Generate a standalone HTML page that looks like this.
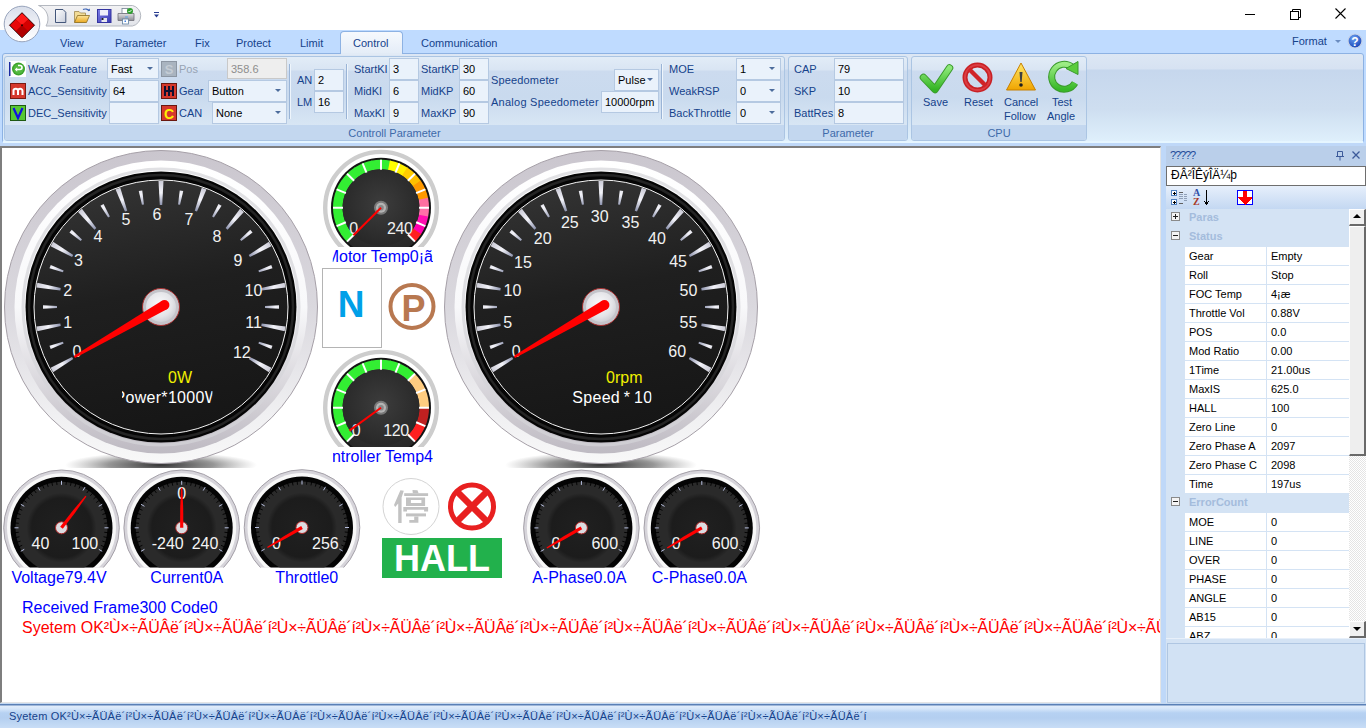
<!DOCTYPE html><html><head><meta charset="utf-8"><style>
*{margin:0;padding:0;box-sizing:border-box}
html,body{width:1366px;height:728px;overflow:hidden;background:#fff;font-family:"Liberation Sans",sans-serif;font-size:11px}
.a{position:absolute}
.t{position:absolute;white-space:nowrap;line-height:1}
.lbl{color:#15428B}
.box{position:absolute;background:#EAF2FB;border:1px solid #B5C9E2}
.dd:after{content:"";position:absolute;right:5px;top:8px;border-left:3px solid transparent;border-right:3px solid transparent;border-top:3px solid #4C6C9C}
.bt{position:absolute;left:3px;top:5px;color:#000;white-space:nowrap;line-height:1}
</style></head><body>

<div class="a" style="left:0;top:0;width:1366px;height:30px;background:#fff"></div>
<div class="a" style="left:1245px;top:14px;width:10px;height:1px;background:#000"></div>
<svg class="a" style="left:1288px;top:7px" width="14" height="14"><rect x="2.5" y="4.5" width="8" height="8" fill="none" stroke="#000"/><path d="M4.5 4.5V2.5H12.5V10.5H10.5" fill="none" stroke="#000"/></svg>
<svg class="a" style="left:1334px;top:7px" width="14" height="14"><path d="M1.5 1.5L11.5 11.5M11.5 1.5L1.5 11.5" stroke="#000" stroke-width="1.1"/></svg>
<div class="a" style="left:0;top:30px;width:1366px;height:24px;background:#BFDBFF"></div>
<div class="a" style="left:340px;top:31px;width:63px;height:24px;border:1px solid #8DB2E3;border-bottom:none;border-radius:4px 4px 0 0;background:linear-gradient(#F6F9FD,#E3ECF7)"></div>
<div class="t" style="left:60px;top:38px;color:#15428B;font-size:11px">View</div>
<div class="t" style="left:115px;top:38px;color:#15428B;font-size:11px">Parameter</div>
<div class="t" style="left:195px;top:38px;color:#15428B;font-size:11px">Fix</div>
<div class="t" style="left:236px;top:38px;color:#15428B;font-size:11px">Protect</div>
<div class="t" style="left:300px;top:38px;color:#15428B;font-size:11px">Limit</div>
<div class="t" style="left:353px;top:38px;color:#15428B;font-size:11px">Control</div>
<div class="t" style="left:421px;top:38px;color:#15428B;font-size:11px">Communication</div>
<div class="t" style="left:1292px;top:36px;color:#15428B;font-size:11px">Format</div>
<div class="a" style="left:1335px;top:40px;border-left:3px solid transparent;border-right:3px solid transparent;border-top:3px solid #6A8CC0"></div>
<svg class="a" style="left:1347px;top:33px" width="16" height="16"><defs><radialGradient id="hg" cx="0.4" cy="0.3" r="0.7"><stop offset="0" stop-color="#6AA0F0"/><stop offset="1" stop-color="#1A46B8"/></radialGradient></defs><circle cx="8" cy="8" r="7" fill="url(#hg)" stroke="#C8D4E8" stroke-width="1.2"/><text x="8" y="12.5" font-family="Liberation Sans" font-weight="bold" font-size="12" fill="#fff" text-anchor="middle">?</text></svg>
<div class="a" style="left:0;top:54px;width:1366px;height:92px;background:#BFDBFF"></div>
<div class="a" style="left:2px;top:53px;width:1362px;height:90px;border:1px solid #8DB2E3;border-radius:3px;background:linear-gradient(#DDE7F4 0px,#D6E2F2 15px,#C6D7ED 16px,#CEDEF0 55px,#DFF0FC 88px)"></div>
<div class="a" style="left:3px;top:141px;width:1360px;height:2px;background:#E6F6FF"></div>
<div class="a" style="left:341px;top:53px;width:61px;height:2px;background:#E2EBF6"></div>
<div class="a" style="left:4px;top:56px;width:781px;height:85px;border:1px solid #ABC5E3;border-radius:3px;background:linear-gradient(#E2ECF7 0px,#D9E5F3 13px,#CCDBEF 14px,#C9DAEE 40px,#D8E6F4 68px)"></div>
<div class="a" style="left:5px;top:125px;width:779px;height:15px;background:#C3D7EF;border-radius:0 0 2px 2px"></div>
<div class="t" style="left:4px;width:781px;text-align:center;top:128px;color:#3E6AAA;font-size:11px">Controll Parameter</div>
<div class="a" style="left:788px;top:56px;width:120px;height:85px;border:1px solid #ABC5E3;border-radius:3px;background:linear-gradient(#E2ECF7 0px,#D9E5F3 13px,#CCDBEF 14px,#C9DAEE 40px,#D8E6F4 68px)"></div>
<div class="a" style="left:789px;top:125px;width:118px;height:15px;background:#C3D7EF;border-radius:0 0 2px 2px"></div>
<div class="t" style="left:788px;width:120px;text-align:center;top:128px;color:#3E6AAA;font-size:11px">Parameter</div>
<div class="a" style="left:911px;top:56px;width:176px;height:85px;border:1px solid #ABC5E3;border-radius:3px;background:linear-gradient(#E2ECF7 0px,#D9E5F3 13px,#CCDBEF 14px,#C9DAEE 40px,#D8E6F4 68px)"></div>
<div class="a" style="left:912px;top:125px;width:174px;height:15px;background:#C3D7EF;border-radius:0 0 2px 2px"></div>
<div class="t" style="left:911px;width:176px;text-align:center;top:128px;color:#3E6AAA;font-size:11px">CPU</div>
<svg class="a" style="left:9px;top:61px" width="18" height="17"><rect x="1" y="0" width="16" height="16" fill="#fff"/><rect x="0" y="1" width="1.5" height="14" fill="#1C2AA0"/><circle cx="9.5" cy="8" r="6.5" fill="#3CA32A"/><circle cx="9.5" cy="8" r="5" fill="#52B83E"/><path d="M6.5 8.5h4.5a2 2 0 0 0 0-4H9" stroke="#fff" stroke-width="1.6" fill="none"/><path d="M6 8.5l2.2-2.2v4.4z" fill="#fff"/></svg>
<svg class="a" style="left:10px;top:83px" width="16" height="16"><rect x="0.5" y="0.5" width="15" height="15" fill="#D5382C" stroke="#7A1A12"/><path d="M3.5 12V6.5M3.5 8a2.2 2.2 0 0 1 4.5 0V12M8 8a2.2 2.2 0 0 1 4.5 0V12" stroke="#fff" stroke-width="2" fill="none"/></svg>
<svg class="a" style="left:10px;top:105px" width="16" height="16"><rect x="0.5" y="0.5" width="15" height="15" fill="#56C832" stroke="#1F5A10"/><path d="M3.5 3L8 13L12.5 3" stroke="#1010E0" stroke-width="2.2" fill="none"/></svg>
<div class="t" style="left:28px;top:64px;color:#15428B;font-size:11px">Weak Feature</div>
<div class="t" style="left:28px;top:86px;color:#15428B;font-size:11px">ACC_Sensitivity</div>
<div class="t" style="left:28px;top:108px;color:#15428B;font-size:11px">DEC_Sensitivity</div>
<div class="box dd" style="left:107px;top:58px;width:52px;height:21px"><span class="bt" style="color:#000">Fast</span></div>
<div class="box" style="left:109px;top:80px;width:50px;height:22px"><span class="bt" style="color:#000">64</span></div>
<div class="box" style="left:109px;top:102px;width:50px;height:22px"><span class="bt" style="color:#000"></span></div>
<svg class="a" style="left:161px;top:61px" width="16" height="16"><rect x="0.5" y="0.5" width="15" height="15" fill="#A9B4C0" stroke="#8C96A3"/><text x="8" y="13" font-family="Liberation Sans" font-weight="bold" font-size="13" fill="#C4CCD5" text-anchor="middle">S</text></svg>
<svg class="a" style="left:161px;top:83px" width="16" height="16"><rect x="0.5" y="0.5" width="15" height="15" fill="#D5382C" stroke="#6A1810"/><path d="M4 3v10M8 3v10M12 3v10M4 8h8" stroke="#101030" stroke-width="2"/></svg>
<svg class="a" style="left:161px;top:105px" width="16" height="16"><rect x="0.5" y="0.5" width="15" height="15" fill="#D5382C" stroke="#6A1810"/><text x="8" y="13.5" font-family="Liberation Sans" font-weight="bold" font-size="14" fill="#FFF200" text-anchor="middle">C</text></svg>
<div class="t" style="left:179px;top:64px;color:#97A3B3;font-size:11px">Pos</div>
<div class="t" style="left:179px;top:86px;color:#15428B;font-size:11px">Gear</div>
<div class="t" style="left:179px;top:108px;color:#15428B;font-size:11px">CAN</div>
<div class="box" style="left:227px;top:58px;width:60px;height:21px;background:#EEEEEE;border-color:#C9C9C9"><span class="bt" style="color:#8D8D8D">358.6</span></div>
<div class="box dd" style="left:208px;top:80px;width:79px;height:22px"><span class="bt" style="color:#000">Button</span></div>
<div class="box dd" style="left:212px;top:102px;width:75px;height:22px"><span class="bt" style="color:#000">None</span></div>
<div class="a" style="left:289px;top:64px;width:1px;height:55px;background:#9AB4D6;box-shadow:1px 0 0 #EEF5FC"></div>
<div class="t" style="left:297px;top:75px;color:#15428B;font-size:11px">AN</div>
<div class="t" style="left:297px;top:97px;color:#15428B;font-size:11px">LM</div>
<div class="box" style="left:314px;top:69px;width:30px;height:22px"><span class="bt" style="color:#000">2</span></div>
<div class="box" style="left:314px;top:91px;width:30px;height:22px"><span class="bt" style="color:#000">16</span></div>
<div class="a" style="left:346px;top:64px;width:1px;height:55px;background:#9AB4D6;box-shadow:1px 0 0 #EEF5FC"></div>
<div class="t" style="left:354px;top:64px;color:#15428B;font-size:11px">StartKI</div>
<div class="t" style="left:354px;top:86px;color:#15428B;font-size:11px">MidKI</div>
<div class="t" style="left:354px;top:108px;color:#15428B;font-size:11px">MaxKI</div>
<div class="box" style="left:389px;top:58px;width:30px;height:22px"><span class="bt" style="color:#000">3</span></div>
<div class="box" style="left:389px;top:80px;width:30px;height:22px"><span class="bt" style="color:#000">6</span></div>
<div class="box" style="left:389px;top:102px;width:30px;height:22px"><span class="bt" style="color:#000">9</span></div>
<div class="t" style="left:421px;top:64px;color:#15428B;font-size:11px">StartKP</div>
<div class="t" style="left:421px;top:86px;color:#15428B;font-size:11px">MidKP</div>
<div class="t" style="left:421px;top:108px;color:#15428B;font-size:11px">MaxKP</div>
<div class="box" style="left:459px;top:58px;width:30px;height:22px"><span class="bt" style="color:#000">30</span></div>
<div class="box" style="left:459px;top:80px;width:30px;height:22px"><span class="bt" style="color:#000">60</span></div>
<div class="box" style="left:459px;top:102px;width:30px;height:22px"><span class="bt" style="color:#000">90</span></div>
<div class="t" style="left:491px;top:75px;color:#15428B;font-size:11px"><span style="letter-spacing:0.15px">Speedometer</span></div>
<div class="t" style="left:491px;top:97px;color:#15428B;font-size:11px"><span style="letter-spacing:0.25px">Analog Speedometer</span></div>
<div class="box dd" style="left:614px;top:69px;width:45px;height:22px"><span class="bt" style="color:#000">Pulse</span></div>
<div class="box" style="left:601px;top:91px;width:58px;height:22px"><span class="bt" style="color:#000">10000rpm</span></div>
<div class="a" style="left:661px;top:64px;width:1px;height:55px;background:#9AB4D6;box-shadow:1px 0 0 #EEF5FC"></div>
<div class="t" style="left:669px;top:64px;color:#15428B;font-size:11px">MOE</div>
<div class="t" style="left:669px;top:86px;color:#15428B;font-size:11px">WeakRSP</div>
<div class="t" style="left:669px;top:108px;color:#15428B;font-size:11px">BackThrottle</div>
<div class="box dd" style="left:736px;top:58px;width:45px;height:22px"><span class="bt" style="color:#000">1</span></div>
<div class="box dd" style="left:736px;top:80px;width:45px;height:22px"><span class="bt" style="color:#000">0</span></div>
<div class="box dd" style="left:736px;top:102px;width:45px;height:22px"><span class="bt" style="color:#000">0</span></div>
<div class="t" style="left:794px;top:64px;color:#15428B;font-size:11px">CAP</div>
<div class="t" style="left:794px;top:86px;color:#15428B;font-size:11px">SKP</div>
<div class="t" style="left:794px;top:108px;color:#15428B;font-size:11px">BattRes</div>
<div class="box" style="left:834px;top:58px;width:70px;height:22px"><span class="bt" style="color:#000">79</span></div>
<div class="box" style="left:834px;top:80px;width:70px;height:22px"><span class="bt" style="color:#000">10</span></div>
<div class="box" style="left:834px;top:102px;width:70px;height:22px"><span class="bt" style="color:#000">8</span></div>
<svg class="a" style="left:915px;top:58px" width="172" height="40">
<defs><linearGradient id="ck" x1="0" y1="0" x2="0" y2="1"><stop offset="0" stop-color="#8CE878"/><stop offset="1" stop-color="#34B424"/></linearGradient>
<linearGradient id="rg" x1="0" y1="0" x2="0" y2="1"><stop offset="0" stop-color="#9CEC84"/><stop offset="1" stop-color="#38B828"/></linearGradient>
<linearGradient id="wg" x1="0" y1="0" x2="0" y2="1"><stop offset="0" stop-color="#FFE868"/><stop offset="1" stop-color="#F0A400"/></linearGradient></defs>
<path d="M8.5 19.5L20 31.5L34.5 10" fill="none" stroke="#3A9A2C" stroke-width="7.5" stroke-linecap="round" stroke-linejoin="round"/>
<path d="M8.5 19.5L20 31.5L34.5 10" fill="none" stroke="url(#ck)" stroke-width="5.5" stroke-linecap="round" stroke-linejoin="round"/>
<circle cx="62.5" cy="19.5" r="12.5" fill="none" stroke="#C82024" stroke-width="5"/>
<circle cx="62.5" cy="19.5" r="12.5" fill="none" stroke="#E85058" stroke-width="2" stroke-opacity="0.6"/>
<path d="M54 11L71 28" stroke="#D02428" stroke-width="4.5"/>
<path d="M106 5L120.5 32H91.5Z" fill="url(#wg)" stroke="#C88000" stroke-width="1" stroke-linejoin="round"/>
<path d="M104.5 14h3l-0.8 10h-1.4z" fill="#404040"/><circle cx="106" cy="27" r="1.8" fill="#202020"/>
<path d="M160 25A12.5 12.5 0 1 1 157 9" fill="none" stroke="#3A9A2C" stroke-width="7"/>
<path d="M160 25A12.5 12.5 0 1 1 157 9" fill="none" stroke="url(#rg)" stroke-width="5"/>
<path d="M151 10.5L163 3.5L163 16.5Z" fill="#5ACC3C" stroke="#3A9A2C" stroke-width="1"/>
</svg>
<div class="t" style="left:923px;top:97px;color:#15428B;font-size:11px">Save</div>
<div class="t" style="left:964px;top:97px;color:#15428B;font-size:11px">Reset</div>
<div class="t" style="left:1004px;top:97px;color:#15428B;font-size:11px">Cancel</div>
<div class="t" style="left:1004px;top:111px;color:#15428B;font-size:11px">Follow</div>
<div class="t" style="left:1052px;top:97px;color:#15428B;font-size:11px">Test</div>
<div class="t" style="left:1047px;top:111px;color:#15428B;font-size:11px">Angle</div>
<svg class="a" style="left:0;top:0" width="170" height="50">
<defs><linearGradient id="orb" x1="0" y1="0" x2="0" y2="1"><stop offset="0" stop-color="#D8DEEA"/><stop offset="0.5" stop-color="#EEF0F6"/><stop offset="1" stop-color="#FFFFFF"/></linearGradient>
<linearGradient id="qat" x1="0" y1="0" x2="0" y2="1"><stop offset="0" stop-color="#F2F2F4"/><stop offset="1" stop-color="#E2E4EA"/></linearGradient></defs>
<path d="M38.5 5.5H132.5a10.5 10.5 0 0 1 0 20.5H46a14 14 0 0 0 -7.5 -20.5z" fill="url(#qat)" stroke="#B4B8C0"/>
<circle cx="22" cy="24" r="17.8" fill="url(#orb)" stroke="#98A4BC" stroke-width="1"/>
<path d="M22 12.7L34.5 25.2L22 37.7L9.5 25.2Z" fill="#C00000" stroke="#300000" stroke-width="1"/>
<path d="M22 13.5L28.2 19.2L22 25.2L15.8 19.2Z" fill="#FF1A1A"/>
<path d="M10.5 25.2L15.8 19.7L22 25.2L16 31Z" fill="#E80808"/>
<path d="M33.5 25.2L28.2 19.7L22 25.2L28 31Z" fill="#D40000"/>
<path d="M22 37L16 31L22 25.2L28 31Z" fill="#B00000"/>
<circle cx="22" cy="25.2" r="1" fill="#300000"/>
<defs><linearGradient id="dg" x1="0" y1="0" x2="1" y2="1"><stop offset="0" stop-color="#FFFFFF"/><stop offset="1" stop-color="#C8CEDC"/></linearGradient>
<linearGradient id="fg" x1="0" y1="0" x2="0" y2="1"><stop offset="0" stop-color="#FCE49C"/><stop offset="1" stop-color="#EAA820"/></linearGradient>
<linearGradient id="flg" x1="0" y1="0" x2="1" y2="1"><stop offset="0" stop-color="#8080E8"/><stop offset="1" stop-color="#3838B0"/></linearGradient>
<linearGradient id="pg" x1="0" y1="0" x2="0" y2="1"><stop offset="0" stop-color="#E0E0E4"/><stop offset="1" stop-color="#8C8C94"/></linearGradient></defs>
<path d="M55.5 9.5h7.5l2.8 2.8v10.2h-10.3z" fill="url(#dg)" stroke="#43567A"/>
<path d="M74.5 11.5h4.5l1.5 1.5h5v9h-11z" fill="#F2DC98" stroke="#A08850" stroke-width="0.8"/>
<path d="M77.5 15.5h12l-3 7h-12z" fill="url(#fg)" stroke="#8C6C20" stroke-width="0.8"/>
<path d="M83 9.5a4 3 0 0 1 6 1.5" fill="none" stroke="#3C64B8" stroke-width="1.2"/><path d="M87.5 10.5l2.5 0.5l-0.3-2.5z" fill="#3C64B8"/>
<rect x="97.5" y="9.5" width="13.5" height="13" fill="url(#flg)" stroke="#3434A0"/>
<rect x="100" y="10" width="8" height="5.5" fill="#F0F0FA"/>
<rect x="101.5" y="18" width="5.5" height="4" fill="#E8E8F0"/><rect x="101.5" y="18" width="2" height="2" fill="#202030"/>
<rect x="122" y="8.5" width="6" height="5" fill="#FFFFFF" stroke="#708090" stroke-width="0.8"/>
<path d="M118 13.5h16v7h-16z" fill="url(#pg)" stroke="#707078" stroke-width="0.8"/>
<rect x="125" y="16.5" width="3" height="1" fill="#58A0E8"/>
<rect x="122.5" y="19" width="6" height="5" fill="#FFFFFF" stroke="#6080A0" stroke-width="0.8"/><rect x="124.5" y="20.5" width="1.5" height="1.5" fill="#4080E0"/>
<circle cx="130" cy="11" r="3" fill="#30A030"/><path d="M128.5 11l1 1l2-2" stroke="#fff" stroke-width="0.9" fill="none"/>
<path d="M154 12.5h5" stroke="#283C90"/><path d="M154 14.5h5l-2.5 3z" fill="#283C90"/>
</svg>
<div class="a" style="left:0;top:143px;width:1366px;height:561px;background:#BFD8F8"></div>
<div class="a" style="left:0;top:146px;width:1161px;height:557px;background:#fff;border-top:2px solid #7E7E7E;border-left:2px solid #7E7E7E;border-right:1px solid #E4E4E4;border-bottom:1px solid #E4E4E4"></div>
<div class="a" style="left:322px;top:268px;width:60px;height:80px;border:1px solid #B4B4B4;background:#fff"></div>
<svg class="a" style="left:0;top:0;font-family:&quot;Liberation Sans&quot;,sans-serif" width="1366" height="728"><defs>
<radialGradient id="bez" cx="0.5" cy="0.5" r="0.5"><stop offset="0.86" stop-color="#FFFFFF"/><stop offset="0.93" stop-color="#F2F2F4"/><stop offset="0.975" stop-color="#D6D2DA"/><stop offset="1" stop-color="#A8A2AA"/></radialGradient>
<linearGradient id="bezl" x1="0" y1="0" x2="0" y2="1"><stop offset="0" stop-color="#000" stop-opacity="0"/><stop offset="0.6" stop-color="#000" stop-opacity="0"/><stop offset="1" stop-color="#000" stop-opacity="0.22"/></linearGradient>
<linearGradient id="bzo" x1="0" y1="0" x2="0" y2="1"><stop offset="0" stop-color="#CAC6CE"/><stop offset="0.5" stop-color="#DAD8DE"/><stop offset="0.85" stop-color="#F0F0F2"/><stop offset="1" stop-color="#F8F8F8"/></linearGradient>
<linearGradient id="bzi" x1="0" y1="0" x2="0" y2="1"><stop offset="0" stop-color="#FFFFFF"/><stop offset="0.5" stop-color="#F8F8FA"/><stop offset="1" stop-color="#BEBAC2"/></linearGradient>
<linearGradient id="face" x1="0.3" y1="0" x2="0.5" y2="1"><stop offset="0" stop-color="#343434"/><stop offset="0.45" stop-color="#1F1F1F"/><stop offset="1" stop-color="#161616"/></linearGradient>
<linearGradient id="tick" x1="0" y1="0" x2="0" y2="1"><stop offset="0" stop-color="#F4F4FA"/><stop offset="1" stop-color="#8C8CA0"/></linearGradient>
<radialGradient id="hub" cx="0.45" cy="0.4" r="0.6"><stop offset="0" stop-color="#FAFAFC"/><stop offset="0.7" stop-color="#E4E4E8"/><stop offset="1" stop-color="#D0D0D6"/></radialGradient>
<radialGradient id="shad" cx="0.5" cy="0.5" r="0.5"><stop offset="0" stop-color="#282828" stop-opacity="0.95"/><stop offset="0.55" stop-color="#505050" stop-opacity="0.6"/><stop offset="1" stop-color="#808080" stop-opacity="0"/></radialGradient>
<radialGradient id="sface" cx="0.5" cy="0.45" r="0.6"><stop offset="0" stop-color="#3C3C3C"/><stop offset="1" stop-color="#262626"/></radialGradient>
<radialGradient id="mface" cx="0.5" cy="0.5" r="0.5"><stop offset="0" stop-color="#202020"/><stop offset="0.85" stop-color="#1C1C1C"/><stop offset="1" stop-color="#2A2A2A"/></radialGradient>
<clipPath id="c1"><rect x="2" y="148" width="1158" height="320"/></clipPath>
</defs>
<radialGradient id="tkg1" gradientUnits="userSpaceOnUse" cx="161" cy="307" r="127"><stop offset="0.80" stop-color="#8A90AC"/><stop offset="0.90" stop-color="#F4F4FA"/><stop offset="1" stop-color="#C8C8D4"/></radialGradient>
<g clip-path="url(#c1)">
<ellipse cx="161" cy="465" rx="96" ry="13" fill="url(#shad)"/>
</g>
<circle cx="161" cy="307" r="156.5" fill="url(#bzo)" stroke="#A6A0A8" stroke-width="1"/>
<circle cx="161" cy="307" r="146.5" fill="url(#bzi)"/>
<circle cx="161" cy="307" r="138" fill="none" stroke="#D4D4D8" stroke-width="3" stroke-opacity="0.7"/>
<circle cx="161" cy="307" r="135.5" fill="#050505"/>
<circle cx="161" cy="307" r="132" fill="none" stroke="#242424" stroke-width="2.5"/>
<circle cx="161" cy="307" r="127" fill="url(#face)" stroke="#F4F4F4" stroke-width="1"/>
<polygon points="72.07,356.96 50.63,367.83 53.13,372.17 73.27,359.04" fill="url(#tkg1)"/>
<polygon points="62.93,341.63 49.50,345.67 50.73,349.05 63.61,343.51" fill="url(#tkg1)"/>
<polygon points="60.34,323.53 36.48,326.42 37.35,331.34 60.76,325.89" fill="url(#tkg1)"/>
<polygon points="57.00,306.00 43.00,305.20 43.00,308.80 57.00,308.00" fill="url(#tkg1)"/>
<polygon points="60.76,288.11 37.35,282.66 36.48,287.58 60.34,290.47" fill="url(#tkg1)"/>
<polygon points="63.61,270.49 50.73,264.95 49.50,268.33 62.93,272.37" fill="url(#tkg1)"/>
<polygon points="73.27,254.96 53.13,241.83 50.63,246.17 72.07,257.04" fill="url(#tkg1)"/>
<polygon points="81.97,239.38 71.76,229.77 69.45,232.53 80.69,240.92" fill="url(#tkg1)"/>
<polygon points="96.35,228.09 81.92,208.87 78.09,212.09 94.52,229.63" fill="url(#tkg1)"/>
<polygon points="109.87,216.43 103.56,203.91 100.44,205.71 108.13,217.43" fill="url(#tkg1)"/>
<polygon points="127.24,210.74 120.25,187.74 115.56,189.45 124.99,211.56" fill="url(#tkg1)"/>
<polygon points="143.93,204.41 142.28,190.48 138.74,191.11 141.96,204.75" fill="url(#tkg1)"/>
<polygon points="162.20,205.00 163.50,181.00 158.50,181.00 159.80,205.00" fill="url(#tkg1)"/>
<polygon points="180.04,204.75 183.26,191.11 179.72,190.48 178.07,204.41" fill="url(#tkg1)"/>
<polygon points="197.01,211.56 206.44,189.45 201.75,187.74 194.76,210.74" fill="url(#tkg1)"/>
<polygon points="213.87,217.43 221.56,205.71 218.44,203.91 212.13,216.43" fill="url(#tkg1)"/>
<polygon points="227.48,229.63 243.91,212.09 240.08,208.87 225.65,228.09" fill="url(#tkg1)"/>
<polygon points="241.31,240.92 252.55,232.53 250.24,229.77 240.03,239.38" fill="url(#tkg1)"/>
<polygon points="249.93,257.04 271.37,246.17 268.87,241.83 248.73,254.96" fill="url(#tkg1)"/>
<polygon points="259.07,272.37 272.50,268.33 271.27,264.95 258.39,270.49" fill="url(#tkg1)"/>
<polygon points="261.66,290.47 285.52,287.58 284.65,282.66 261.24,288.11" fill="url(#tkg1)"/>
<polygon points="265.00,308.00 279.00,308.80 279.00,305.20 265.00,306.00" fill="url(#tkg1)"/>
<polygon points="261.24,325.89 284.65,331.34 285.52,326.42 261.66,323.53" fill="url(#tkg1)"/>
<polygon points="258.39,343.51 271.27,349.05 272.50,345.67 259.07,341.63" fill="url(#tkg1)"/>
<polygon points="248.73,359.04 268.87,372.17 271.37,367.83 249.93,356.96" fill="url(#tkg1)"/>
<text x="77" y="356.8" font-size="16" fill="#F2F2F2" text-anchor="middle">0</text>
<text x="67.7" y="327.8" font-size="16" fill="#F2F2F2" text-anchor="middle">1</text>
<text x="67.7" y="296.1" font-size="16" fill="#F2F2F2" text-anchor="middle">2</text>
<text x="78.4" y="266.2" font-size="16" fill="#F2F2F2" text-anchor="middle">3</text>
<text x="98" y="241.5" font-size="16" fill="#F2F2F2" text-anchor="middle">4</text>
<text x="126" y="225.20000000000002" font-size="16" fill="#F2F2F2" text-anchor="middle">5</text>
<text x="157" y="220.4" font-size="16" fill="#F2F2F2" text-anchor="middle">6</text>
<text x="189" y="225.20000000000002" font-size="16" fill="#F2F2F2" text-anchor="middle">7</text>
<text x="217" y="241.5" font-size="16" fill="#F2F2F2" text-anchor="middle">8</text>
<text x="238" y="266.2" font-size="16" fill="#F2F2F2" text-anchor="middle">9</text>
<text x="253.5" y="296.1" font-size="16" fill="#F2F2F2" text-anchor="middle">10</text>
<text x="253.5" y="327.8" font-size="16" fill="#F2F2F2" text-anchor="middle">11</text>
<text x="241.8" y="358.2" font-size="16" fill="#F2F2F2" text-anchor="middle">12</text>
<text x="168" y="383" font-size="16" fill="#F0F000">0W</text>
<clipPath id="tc1"><rect x="122" y="380" width="90.4" height="30"/></clipPath>
<text x="114.5" y="403" font-size="16" fill="#FFFFFF" letter-spacing="0.3" word-spacing="-1" clip-path="url(#tc1)">Power*1000W</text>
<circle cx="161" cy="307" r="18.5" fill="#C4C4CA" stroke="#A83030" stroke-width="1"/>
<circle cx="161" cy="307" r="15" fill="url(#hub)"/>
<polygon points="162.0,300.8 73.7,355.9 75.0,358.1 166.9,309.2" fill="#FF0000"/>
<circle cx="164.5" cy="305.0" r="4.9" fill="#FF0000"/>
<radialGradient id="tkg2" gradientUnits="userSpaceOnUse" cx="601" cy="307" r="127"><stop offset="0.80" stop-color="#8A90AC"/><stop offset="0.90" stop-color="#F4F4FA"/><stop offset="1" stop-color="#C8C8D4"/></radialGradient>
<g clip-path="url(#c1)">
<ellipse cx="601" cy="465" rx="96" ry="13" fill="url(#shad)"/>
</g>
<circle cx="601" cy="307" r="156.5" fill="url(#bzo)" stroke="#A6A0A8" stroke-width="1"/>
<circle cx="601" cy="307" r="146.5" fill="url(#bzi)"/>
<circle cx="601" cy="307" r="138" fill="none" stroke="#D4D4D8" stroke-width="3" stroke-opacity="0.7"/>
<circle cx="601" cy="307" r="135.5" fill="#050505"/>
<circle cx="601" cy="307" r="132" fill="none" stroke="#242424" stroke-width="2.5"/>
<circle cx="601" cy="307" r="127" fill="url(#face)" stroke="#F4F4F4" stroke-width="1"/>
<polygon points="512.07,356.96 490.63,367.83 493.13,372.17 513.27,359.04" fill="url(#tkg2)"/>
<polygon points="502.93,341.63 489.50,345.67 490.73,349.05 503.61,343.51" fill="url(#tkg2)"/>
<polygon points="500.34,323.53 476.48,326.42 477.35,331.34 500.76,325.89" fill="url(#tkg2)"/>
<polygon points="497.00,306.00 483.00,305.20 483.00,308.80 497.00,308.00" fill="url(#tkg2)"/>
<polygon points="500.76,288.11 477.35,282.66 476.48,287.58 500.34,290.47" fill="url(#tkg2)"/>
<polygon points="503.61,270.49 490.73,264.95 489.50,268.33 502.93,272.37" fill="url(#tkg2)"/>
<polygon points="513.27,254.96 493.13,241.83 490.63,246.17 512.07,257.04" fill="url(#tkg2)"/>
<polygon points="521.97,239.38 511.76,229.77 509.45,232.53 520.69,240.92" fill="url(#tkg2)"/>
<polygon points="536.35,228.09 521.92,208.87 518.09,212.09 534.52,229.63" fill="url(#tkg2)"/>
<polygon points="549.87,216.43 543.56,203.91 540.44,205.71 548.13,217.43" fill="url(#tkg2)"/>
<polygon points="567.24,210.74 560.25,187.74 555.56,189.45 564.99,211.56" fill="url(#tkg2)"/>
<polygon points="583.93,204.41 582.28,190.48 578.74,191.11 581.96,204.75" fill="url(#tkg2)"/>
<polygon points="602.20,205.00 603.50,181.00 598.50,181.00 599.80,205.00" fill="url(#tkg2)"/>
<polygon points="620.04,204.75 623.26,191.11 619.72,190.48 618.07,204.41" fill="url(#tkg2)"/>
<polygon points="637.01,211.56 646.44,189.45 641.75,187.74 634.76,210.74" fill="url(#tkg2)"/>
<polygon points="653.87,217.43 661.56,205.71 658.44,203.91 652.13,216.43" fill="url(#tkg2)"/>
<polygon points="667.48,229.63 683.91,212.09 680.08,208.87 665.65,228.09" fill="url(#tkg2)"/>
<polygon points="681.31,240.92 692.55,232.53 690.24,229.77 680.03,239.38" fill="url(#tkg2)"/>
<polygon points="689.93,257.04 711.37,246.17 708.87,241.83 688.73,254.96" fill="url(#tkg2)"/>
<polygon points="699.07,272.37 712.50,268.33 711.27,264.95 698.39,270.49" fill="url(#tkg2)"/>
<polygon points="701.66,290.47 725.52,287.58 724.65,282.66 701.24,288.11" fill="url(#tkg2)"/>
<polygon points="705.00,308.00 719.00,308.80 719.00,305.20 705.00,306.00" fill="url(#tkg2)"/>
<polygon points="701.24,325.89 724.65,331.34 725.52,326.42 701.66,323.53" fill="url(#tkg2)"/>
<polygon points="698.39,343.51 711.27,349.05 712.50,345.67 699.07,341.63" fill="url(#tkg2)"/>
<polygon points="688.73,359.04 708.87,372.17 711.37,367.83 689.93,356.96" fill="url(#tkg2)"/>
<text x="516.1" y="356.8" font-size="16" fill="#F2F2F2" text-anchor="middle">0</text>
<text x="507.7" y="327.8" font-size="16" fill="#F2F2F2" text-anchor="middle">5</text>
<text x="512.4" y="296.1" font-size="16" fill="#F2F2F2" text-anchor="middle">10</text>
<text x="523" y="268.1" font-size="16" fill="#F2F2F2" text-anchor="middle">15</text>
<text x="542.7" y="243.8" font-size="16" fill="#F2F2F2" text-anchor="middle">20</text>
<text x="569.8" y="227.5" font-size="16" fill="#F2F2F2" text-anchor="middle">25</text>
<text x="599.7" y="221.9" font-size="16" fill="#F2F2F2" text-anchor="middle">30</text>
<text x="630.5" y="227.5" font-size="16" fill="#F2F2F2" text-anchor="middle">35</text>
<text x="657" y="243.8" font-size="16" fill="#F2F2F2" text-anchor="middle">40</text>
<text x="678.1" y="267.2" font-size="16" fill="#F2F2F2" text-anchor="middle">45</text>
<text x="688.4" y="296.1" font-size="16" fill="#F2F2F2" text-anchor="middle">50</text>
<text x="688.4" y="327.8" font-size="16" fill="#F2F2F2" text-anchor="middle">55</text>
<text x="677.2" y="356.8" font-size="16" fill="#F2F2F2" text-anchor="middle">60</text>
<text x="606" y="383" font-size="16" fill="#F0F000">0rpm</text>
<clipPath id="tc2"><rect x="560" y="380" width="91.5" height="30"/></clipPath>
<text x="572.3" y="403" font-size="16" fill="#FFFFFF" letter-spacing="0.3" word-spacing="-1" clip-path="url(#tc2)">Speed * 10</text>
<circle cx="601" cy="307" r="18.5" fill="#C4C4CA" stroke="#A83030" stroke-width="1"/>
<circle cx="601" cy="307" r="15" fill="url(#hub)"/>
<polygon points="602.0,300.8 513.7,355.9 515.0,358.1 606.9,309.2" fill="#FF0000"/>
<circle cx="604.5" cy="305.0" r="4.9" fill="#FF0000"/>
<clipPath id="tg1"><rect x="320" y="147.7" width="125" height="99.30000000000001"/></clipPath>
<g clip-path="url(#tg1)">
<circle cx="381" cy="207.7" r="55.8" fill="#FFFFFF" stroke="#CDCDCD" stroke-width="4.4"/>
<circle cx="381" cy="207.7" r="50" fill="#141414"/>
<circle cx="381" cy="207.7" r="48" fill="url(#sface)"/>
<path d="M350.42,238.28 A43.25,43.25 0 0 1 344.79,231.35" fill="none" stroke="#33EE33" stroke-width="9.5"/>
<path d="M345.29,232.10 A43.25,43.25 0 0 1 340.87,223.83" fill="none" stroke="#33EE33" stroke-width="9.5"/>
<path d="M341.22,224.67 A43.25,43.25 0 0 1 338.50,215.69" fill="none" stroke="#33EE33" stroke-width="9.5"/>
<path d="M338.67,216.58 A43.25,43.25 0 0 1 337.75,207.25" fill="none" stroke="#33EE33" stroke-width="9.5"/>
<path d="M337.75,208.15 A43.25,43.25 0 0 1 338.67,198.82" fill="none" stroke="#33EE33" stroke-width="9.5"/>
<path d="M338.50,199.71 A43.25,43.25 0 0 1 341.22,190.73" fill="none" stroke="#33EE33" stroke-width="9.5"/>
<path d="M340.87,191.57 A43.25,43.25 0 0 1 345.29,183.30" fill="none" stroke="#33EE33" stroke-width="9.5"/>
<path d="M344.79,184.05 A43.25,43.25 0 0 1 350.74,176.80" fill="none" stroke="#33EE33" stroke-width="9.5"/>
<path d="M350.10,177.44 A43.25,43.25 0 0 1 357.35,171.49" fill="none" stroke="#33EE33" stroke-width="9.5"/>
<path d="M356.60,171.99 A43.25,43.25 0 0 1 364.87,167.57" fill="none" stroke="#33EE33" stroke-width="9.5"/>
<path d="M364.03,167.92 A43.25,43.25 0 0 1 373.01,165.20" fill="none" stroke="#33EE33" stroke-width="9.5"/>
<path d="M372.12,165.37 A43.25,43.25 0 0 1 381.45,164.45" fill="none" stroke="#33EE33" stroke-width="9.5"/>
<path d="M380.55,164.45 A43.25,43.25 0 0 1 389.88,165.37" fill="none" stroke="#33EE33" stroke-width="9.5"/>
<path d="M388.99,165.20 A43.25,43.25 0 0 1 397.97,167.92" fill="none" stroke="#FFFF00" stroke-width="9.5"/>
<path d="M397.13,167.57 A43.25,43.25 0 0 1 405.40,171.99" fill="none" stroke="#FFF000" stroke-width="9.5"/>
<path d="M404.65,171.49 A43.25,43.25 0 0 1 411.90,177.44" fill="none" stroke="#FFCC00" stroke-width="9.5"/>
<path d="M411.26,176.80 A43.25,43.25 0 0 1 417.21,184.05" fill="none" stroke="#FFC000" stroke-width="9.5"/>
<path d="M416.71,183.30 A43.25,43.25 0 0 1 421.13,191.57" fill="none" stroke="#FF9900" stroke-width="9.5"/>
<path d="M420.78,190.73 A43.25,43.25 0 0 1 423.50,199.71" fill="none" stroke="#FF9900" stroke-width="9.5"/>
<path d="M423.33,198.82 A43.25,43.25 0 0 1 424.25,208.15" fill="none" stroke="#FF6FA0" stroke-width="9.5"/>
<path d="M424.25,207.25 A43.25,43.25 0 0 1 423.33,216.58" fill="none" stroke="#FF70A8" stroke-width="9.5"/>
<path d="M423.50,215.69 A43.25,43.25 0 0 1 420.78,224.67" fill="none" stroke="#FF10B0" stroke-width="9.5"/>
<path d="M421.13,223.83 A43.25,43.25 0 0 1 416.71,232.10" fill="none" stroke="#FF00B0" stroke-width="9.5"/>
<path d="M417.21,231.35 A43.25,43.25 0 0 1 411.58,238.28" fill="none" stroke="#FF2020" stroke-width="9.5"/>
<circle cx="381" cy="207.7" r="38.5" fill="url(#sface)"/>
<line x1="354.13" y1="234.57" x2="347.06" y2="241.64" stroke="#FFFFFF" stroke-width="2"/>
<line x1="345.89" y1="222.24" x2="336.65" y2="226.07" stroke="#FFFFFF" stroke-width="2"/>
<line x1="343.00" y1="207.70" x2="333.00" y2="207.70" stroke="#FFFFFF" stroke-width="2"/>
<line x1="345.89" y1="193.16" x2="336.65" y2="189.33" stroke="#FFFFFF" stroke-width="2"/>
<line x1="354.13" y1="180.83" x2="347.06" y2="173.76" stroke="#FFFFFF" stroke-width="2"/>
<line x1="366.46" y1="172.59" x2="362.63" y2="163.35" stroke="#FFFFFF" stroke-width="2"/>
<line x1="381.00" y1="169.70" x2="381.00" y2="159.70" stroke="#FFFFFF" stroke-width="2"/>
<line x1="395.54" y1="172.59" x2="399.37" y2="163.35" stroke="#FFFFFF" stroke-width="2"/>
<line x1="407.87" y1="180.83" x2="414.94" y2="173.76" stroke="#FFFFFF" stroke-width="2"/>
<line x1="416.11" y1="193.16" x2="425.35" y2="189.33" stroke="#FFFFFF" stroke-width="2"/>
<line x1="419.00" y1="207.70" x2="429.00" y2="207.70" stroke="#FFFFFF" stroke-width="2"/>
<line x1="416.11" y1="222.24" x2="425.35" y2="226.07" stroke="#FFFFFF" stroke-width="2"/>
<line x1="407.87" y1="234.57" x2="414.94" y2="241.64" stroke="#FFFFFF" stroke-width="2"/>
<text x="349.3" y="234.0" font-size="16" fill="#F0F0F0">0</text>
<text x="387" y="234.0" font-size="16" letter-spacing="-0.4" fill="#F0F0F0">240</text>
<circle cx="381" cy="207.7" r="7" fill="#7A7A7A"/><circle cx="381" cy="207.7" r="5" fill="#B4B4B4"/><circle cx="381" cy="207.7" r="2.8" fill="#888"/>
<line x1="381" y1="207.7" x2="353.4" y2="235.3" stroke="#FF0000" stroke-width="2"/>
</g>
<clipPath id="tg1t"><rect x="332.8" y="247" width="100.2" height="20"/></clipPath>
<text x="433" y="262" font-size="16" fill="#0000FF" text-anchor="end" clip-path="url(#tg1t)">Motor Temp0¡ã</text>
<clipPath id="tg2"><rect x="320" y="347.7" width="125" height="99.30000000000001"/></clipPath>
<g clip-path="url(#tg2)">
<circle cx="381" cy="407.7" r="55.8" fill="#FFFFFF" stroke="#CDCDCD" stroke-width="4.4"/>
<circle cx="381" cy="407.7" r="50" fill="#141414"/>
<circle cx="381" cy="407.7" r="48" fill="url(#sface)"/>
<path d="M350.42,438.28 A43.25,43.25 0 0 1 344.79,431.35" fill="none" stroke="#33EE33" stroke-width="9.5"/>
<path d="M345.29,432.10 A43.25,43.25 0 0 1 340.87,423.83" fill="none" stroke="#33EE33" stroke-width="9.5"/>
<path d="M341.22,424.67 A43.25,43.25 0 0 1 338.50,415.69" fill="none" stroke="#33EE33" stroke-width="9.5"/>
<path d="M338.67,416.58 A43.25,43.25 0 0 1 337.75,407.25" fill="none" stroke="#33EE33" stroke-width="9.5"/>
<path d="M337.75,408.15 A43.25,43.25 0 0 1 338.67,398.82" fill="none" stroke="#33EE33" stroke-width="9.5"/>
<path d="M338.50,399.71 A43.25,43.25 0 0 1 341.22,390.73" fill="none" stroke="#33EE33" stroke-width="9.5"/>
<path d="M340.87,391.57 A43.25,43.25 0 0 1 345.29,383.30" fill="none" stroke="#33EE33" stroke-width="9.5"/>
<path d="M344.79,384.05 A43.25,43.25 0 0 1 350.74,376.80" fill="none" stroke="#33EE33" stroke-width="9.5"/>
<path d="M350.10,377.44 A43.25,43.25 0 0 1 357.35,371.49" fill="none" stroke="#33EE33" stroke-width="9.5"/>
<path d="M356.60,371.99 A43.25,43.25 0 0 1 364.87,367.57" fill="none" stroke="#33EE33" stroke-width="9.5"/>
<path d="M364.03,367.92 A43.25,43.25 0 0 1 373.01,365.20" fill="none" stroke="#33EE33" stroke-width="9.5"/>
<path d="M372.12,365.37 A43.25,43.25 0 0 1 381.45,364.45" fill="none" stroke="#33EE33" stroke-width="9.5"/>
<path d="M380.55,364.45 A43.25,43.25 0 0 1 389.88,365.37" fill="none" stroke="#33EE33" stroke-width="9.5"/>
<path d="M388.99,365.20 A43.25,43.25 0 0 1 397.97,367.92" fill="none" stroke="#33EE33" stroke-width="9.5"/>
<path d="M397.13,367.57 A43.25,43.25 0 0 1 405.40,371.99" fill="none" stroke="#33EE33" stroke-width="9.5"/>
<path d="M404.65,371.49 A43.25,43.25 0 0 1 411.90,377.44" fill="none" stroke="#33EE33" stroke-width="9.5"/>
<path d="M411.26,376.80 A43.25,43.25 0 0 1 417.21,384.05" fill="none" stroke="#FFCC80" stroke-width="9.5"/>
<path d="M416.71,383.30 A43.25,43.25 0 0 1 421.13,391.57" fill="none" stroke="#FFCC80" stroke-width="9.5"/>
<path d="M420.78,390.73 A43.25,43.25 0 0 1 423.50,399.71" fill="none" stroke="#FFCC80" stroke-width="9.5"/>
<path d="M423.33,398.82 A43.25,43.25 0 0 1 424.25,408.15" fill="none" stroke="#FFCC80" stroke-width="9.5"/>
<path d="M424.25,407.25 A43.25,43.25 0 0 1 423.33,416.58" fill="none" stroke="#C02020" stroke-width="9.5"/>
<path d="M423.50,415.69 A43.25,43.25 0 0 1 420.78,424.67" fill="none" stroke="#C02020" stroke-width="9.5"/>
<path d="M421.13,423.83 A43.25,43.25 0 0 1 416.71,432.10" fill="none" stroke="#FF2020" stroke-width="9.5"/>
<path d="M417.21,431.35 A43.25,43.25 0 0 1 411.58,438.28" fill="none" stroke="#FF2020" stroke-width="9.5"/>
<circle cx="381" cy="407.7" r="38.5" fill="url(#sface)"/>
<line x1="354.13" y1="434.57" x2="347.06" y2="441.64" stroke="#FFFFFF" stroke-width="2"/>
<line x1="345.89" y1="422.24" x2="336.65" y2="426.07" stroke="#FFFFFF" stroke-width="2"/>
<line x1="343.00" y1="407.70" x2="333.00" y2="407.70" stroke="#FFFFFF" stroke-width="2"/>
<line x1="345.89" y1="393.16" x2="336.65" y2="389.33" stroke="#FFFFFF" stroke-width="2"/>
<line x1="354.13" y1="380.83" x2="347.06" y2="373.76" stroke="#FFFFFF" stroke-width="2"/>
<line x1="366.46" y1="372.59" x2="362.63" y2="363.35" stroke="#FFFFFF" stroke-width="2"/>
<line x1="381.00" y1="369.70" x2="381.00" y2="359.70" stroke="#FFFFFF" stroke-width="2"/>
<line x1="395.54" y1="372.59" x2="399.37" y2="363.35" stroke="#FFFFFF" stroke-width="2"/>
<line x1="407.87" y1="380.83" x2="414.94" y2="373.76" stroke="#FFFFFF" stroke-width="2"/>
<line x1="416.11" y1="393.16" x2="425.35" y2="389.33" stroke="#FFFFFF" stroke-width="2"/>
<line x1="419.00" y1="407.70" x2="429.00" y2="407.70" stroke="#FFFFFF" stroke-width="2"/>
<line x1="416.11" y1="422.24" x2="425.35" y2="426.07" stroke="#FFFFFF" stroke-width="2"/>
<line x1="407.87" y1="434.57" x2="414.94" y2="441.64" stroke="#FFFFFF" stroke-width="2"/>
<text x="351.7" y="436.0" font-size="16" fill="#F0F0F0">0</text>
<text x="383.2" y="436.0" font-size="16" letter-spacing="-0.4" fill="#F0F0F0">120</text>
<circle cx="381" cy="407.7" r="7" fill="#7A7A7A"/><circle cx="381" cy="407.7" r="5" fill="#B4B4B4"/><circle cx="381" cy="407.7" r="2.8" fill="#888"/>
<line x1="381" y1="407.7" x2="349.4" y2="430.6" stroke="#FF0000" stroke-width="2"/>
</g>
<clipPath id="tg2t"><rect x="332.8" y="447" width="100.2" height="20"/></clipPath>
<text x="433" y="462" font-size="16" fill="#0000FF" text-anchor="end" clip-path="url(#tg2t)">Controller Temp4</text>
<text x="351" y="317" font-size="37" font-weight="bold" fill="#00A0E8" text-anchor="middle">N</text>
<circle cx="412" cy="306.5" r="21.5" fill="none" stroke="#B87850" stroke-width="4"/>
<text x="413.5" y="320.5" font-size="36" font-weight="bold" fill="#B87850" text-anchor="middle">P</text>
<clipPath id="sg1"><rect x="-0.5" y="467.79999999999995" width="124" height="99.60000000000002"/></clipPath>
<g clip-path="url(#sg1)">
<circle cx="61.5" cy="527.8" r="57.8" fill="#D6D4DA" stroke="#A4A0A8" stroke-width="1"/>
<circle cx="61.5" cy="527.8" r="54.5" fill="#F8F8F8"/>
<circle cx="61.5" cy="527.8" r="51" fill="#040404"/>
<circle cx="61.5" cy="527.8" r="46" fill="#2A2A2A"/>
<circle cx="61.5" cy="527.8" r="35" fill="url(#mface)"/>
<line x1="24.26" y1="549.30" x2="20.80" y2="551.30" stroke="#B8C0E0" stroke-width="1"/>
<line x1="22.22" y1="545.29" x2="18.56" y2="546.92" stroke="#000" stroke-width="0.9"/>
<line x1="20.60" y1="541.09" x2="16.80" y2="542.32" stroke="#000" stroke-width="0.9"/>
<line x1="19.44" y1="536.74" x2="15.53" y2="537.57" stroke="#000" stroke-width="0.9"/>
<line x1="18.74" y1="532.29" x2="14.76" y2="532.71" stroke="#000" stroke-width="0.9"/>
<line x1="18.50" y1="527.80" x2="14.50" y2="527.80" stroke="#B8C0E0" stroke-width="1"/>
<line x1="18.74" y1="523.31" x2="14.76" y2="522.89" stroke="#000" stroke-width="0.9"/>
<line x1="19.44" y1="518.86" x2="15.53" y2="518.03" stroke="#000" stroke-width="0.9"/>
<line x1="20.60" y1="514.51" x2="16.80" y2="513.28" stroke="#000" stroke-width="0.9"/>
<line x1="22.22" y1="510.31" x2="18.56" y2="508.68" stroke="#000" stroke-width="0.9"/>
<line x1="24.26" y1="506.30" x2="20.80" y2="504.30" stroke="#B8C0E0" stroke-width="1"/>
<line x1="26.71" y1="502.53" x2="23.48" y2="500.17" stroke="#000" stroke-width="0.9"/>
<line x1="29.54" y1="499.03" x2="26.57" y2="496.35" stroke="#000" stroke-width="0.9"/>
<line x1="32.73" y1="495.84" x2="30.05" y2="492.87" stroke="#000" stroke-width="0.9"/>
<line x1="36.23" y1="493.01" x2="33.87" y2="489.78" stroke="#000" stroke-width="0.9"/>
<line x1="40.00" y1="490.56" x2="38.00" y2="487.10" stroke="#B8C0E0" stroke-width="1"/>
<line x1="44.01" y1="488.52" x2="42.38" y2="484.86" stroke="#000" stroke-width="0.9"/>
<line x1="48.21" y1="486.90" x2="46.98" y2="483.10" stroke="#000" stroke-width="0.9"/>
<line x1="52.56" y1="485.74" x2="51.73" y2="481.83" stroke="#000" stroke-width="0.9"/>
<line x1="57.01" y1="485.04" x2="56.59" y2="481.06" stroke="#000" stroke-width="0.9"/>
<line x1="61.50" y1="484.80" x2="61.50" y2="480.80" stroke="#B8C0E0" stroke-width="1"/>
<line x1="65.99" y1="485.04" x2="66.41" y2="481.06" stroke="#000" stroke-width="0.9"/>
<line x1="70.44" y1="485.74" x2="71.27" y2="481.83" stroke="#000" stroke-width="0.9"/>
<line x1="74.79" y1="486.90" x2="76.02" y2="483.10" stroke="#000" stroke-width="0.9"/>
<line x1="78.99" y1="488.52" x2="80.62" y2="484.86" stroke="#000" stroke-width="0.9"/>
<line x1="83.00" y1="490.56" x2="85.00" y2="487.10" stroke="#B8C0E0" stroke-width="1"/>
<line x1="86.77" y1="493.01" x2="89.13" y2="489.78" stroke="#000" stroke-width="0.9"/>
<line x1="90.27" y1="495.84" x2="92.95" y2="492.87" stroke="#000" stroke-width="0.9"/>
<line x1="93.46" y1="499.03" x2="96.43" y2="496.35" stroke="#000" stroke-width="0.9"/>
<line x1="96.29" y1="502.53" x2="99.52" y2="500.17" stroke="#000" stroke-width="0.9"/>
<line x1="98.74" y1="506.30" x2="102.20" y2="504.30" stroke="#B8C0E0" stroke-width="1"/>
<line x1="100.78" y1="510.31" x2="104.44" y2="508.68" stroke="#000" stroke-width="0.9"/>
<line x1="102.40" y1="514.51" x2="106.20" y2="513.28" stroke="#000" stroke-width="0.9"/>
<line x1="103.56" y1="518.86" x2="107.47" y2="518.03" stroke="#000" stroke-width="0.9"/>
<line x1="104.26" y1="523.31" x2="108.24" y2="522.89" stroke="#000" stroke-width="0.9"/>
<line x1="104.50" y1="527.80" x2="108.50" y2="527.80" stroke="#B8C0E0" stroke-width="1"/>
<line x1="104.26" y1="532.29" x2="108.24" y2="532.71" stroke="#000" stroke-width="0.9"/>
<line x1="103.56" y1="536.74" x2="107.47" y2="537.57" stroke="#000" stroke-width="0.9"/>
<line x1="102.40" y1="541.09" x2="106.20" y2="542.32" stroke="#000" stroke-width="0.9"/>
<line x1="100.78" y1="545.29" x2="104.44" y2="546.92" stroke="#000" stroke-width="0.9"/>
<line x1="98.74" y1="549.30" x2="102.20" y2="551.30" stroke="#B8C0E0" stroke-width="1"/>
<text x="31.5" y="548.8" font-size="16" fill="#F4F4F4">40</text>
<text x="71.5" y="548.8" font-size="16" fill="#F4F4F4">100</text>
<circle cx="61.5" cy="527.8" r="6" fill="#DCDCE0" stroke="#B02828" stroke-width="1"/>
<polygon points="62.8,528.8 74.9,512.9 86.4,496.5 85.4,495.7 72.5,511.0 60.2,526.8" fill="#FF0000"/>
</g>
<text x="59" y="583" font-size="16" fill="#0000FF" text-anchor="middle">Voltage79.4V</text>
<clipPath id="sg2"><rect x="119.69999999999999" y="467.79999999999995" width="124" height="99.60000000000002"/></clipPath>
<g clip-path="url(#sg2)">
<circle cx="181.7" cy="527.8" r="57.8" fill="#D6D4DA" stroke="#A4A0A8" stroke-width="1"/>
<circle cx="181.7" cy="527.8" r="54.5" fill="#F8F8F8"/>
<circle cx="181.7" cy="527.8" r="51" fill="#040404"/>
<circle cx="181.7" cy="527.8" r="46" fill="#2A2A2A"/>
<circle cx="181.7" cy="527.8" r="35" fill="url(#mface)"/>
<line x1="144.46" y1="549.30" x2="141.00" y2="551.30" stroke="#B8C0E0" stroke-width="1"/>
<line x1="142.42" y1="545.29" x2="138.76" y2="546.92" stroke="#000" stroke-width="0.9"/>
<line x1="140.80" y1="541.09" x2="137.00" y2="542.32" stroke="#000" stroke-width="0.9"/>
<line x1="139.64" y1="536.74" x2="135.73" y2="537.57" stroke="#000" stroke-width="0.9"/>
<line x1="138.94" y1="532.29" x2="134.96" y2="532.71" stroke="#000" stroke-width="0.9"/>
<line x1="138.70" y1="527.80" x2="134.70" y2="527.80" stroke="#B8C0E0" stroke-width="1"/>
<line x1="138.94" y1="523.31" x2="134.96" y2="522.89" stroke="#000" stroke-width="0.9"/>
<line x1="139.64" y1="518.86" x2="135.73" y2="518.03" stroke="#000" stroke-width="0.9"/>
<line x1="140.80" y1="514.51" x2="137.00" y2="513.28" stroke="#000" stroke-width="0.9"/>
<line x1="142.42" y1="510.31" x2="138.76" y2="508.68" stroke="#000" stroke-width="0.9"/>
<line x1="144.46" y1="506.30" x2="141.00" y2="504.30" stroke="#B8C0E0" stroke-width="1"/>
<line x1="146.91" y1="502.53" x2="143.68" y2="500.17" stroke="#000" stroke-width="0.9"/>
<line x1="149.74" y1="499.03" x2="146.77" y2="496.35" stroke="#000" stroke-width="0.9"/>
<line x1="152.93" y1="495.84" x2="150.25" y2="492.87" stroke="#000" stroke-width="0.9"/>
<line x1="156.43" y1="493.01" x2="154.07" y2="489.78" stroke="#000" stroke-width="0.9"/>
<line x1="160.20" y1="490.56" x2="158.20" y2="487.10" stroke="#B8C0E0" stroke-width="1"/>
<line x1="164.21" y1="488.52" x2="162.58" y2="484.86" stroke="#000" stroke-width="0.9"/>
<line x1="168.41" y1="486.90" x2="167.18" y2="483.10" stroke="#000" stroke-width="0.9"/>
<line x1="172.76" y1="485.74" x2="171.93" y2="481.83" stroke="#000" stroke-width="0.9"/>
<line x1="177.21" y1="485.04" x2="176.79" y2="481.06" stroke="#000" stroke-width="0.9"/>
<line x1="181.70" y1="484.80" x2="181.70" y2="480.80" stroke="#B8C0E0" stroke-width="1"/>
<line x1="186.19" y1="485.04" x2="186.61" y2="481.06" stroke="#000" stroke-width="0.9"/>
<line x1="190.64" y1="485.74" x2="191.47" y2="481.83" stroke="#000" stroke-width="0.9"/>
<line x1="194.99" y1="486.90" x2="196.22" y2="483.10" stroke="#000" stroke-width="0.9"/>
<line x1="199.19" y1="488.52" x2="200.82" y2="484.86" stroke="#000" stroke-width="0.9"/>
<line x1="203.20" y1="490.56" x2="205.20" y2="487.10" stroke="#B8C0E0" stroke-width="1"/>
<line x1="206.97" y1="493.01" x2="209.33" y2="489.78" stroke="#000" stroke-width="0.9"/>
<line x1="210.47" y1="495.84" x2="213.15" y2="492.87" stroke="#000" stroke-width="0.9"/>
<line x1="213.66" y1="499.03" x2="216.63" y2="496.35" stroke="#000" stroke-width="0.9"/>
<line x1="216.49" y1="502.53" x2="219.72" y2="500.17" stroke="#000" stroke-width="0.9"/>
<line x1="218.94" y1="506.30" x2="222.40" y2="504.30" stroke="#B8C0E0" stroke-width="1"/>
<line x1="220.98" y1="510.31" x2="224.64" y2="508.68" stroke="#000" stroke-width="0.9"/>
<line x1="222.60" y1="514.51" x2="226.40" y2="513.28" stroke="#000" stroke-width="0.9"/>
<line x1="223.76" y1="518.86" x2="227.67" y2="518.03" stroke="#000" stroke-width="0.9"/>
<line x1="224.46" y1="523.31" x2="228.44" y2="522.89" stroke="#000" stroke-width="0.9"/>
<line x1="224.70" y1="527.80" x2="228.70" y2="527.80" stroke="#B8C0E0" stroke-width="1"/>
<line x1="224.46" y1="532.29" x2="228.44" y2="532.71" stroke="#000" stroke-width="0.9"/>
<line x1="223.76" y1="536.74" x2="227.67" y2="537.57" stroke="#000" stroke-width="0.9"/>
<line x1="222.60" y1="541.09" x2="226.40" y2="542.32" stroke="#000" stroke-width="0.9"/>
<line x1="220.98" y1="545.29" x2="224.64" y2="546.92" stroke="#000" stroke-width="0.9"/>
<line x1="218.94" y1="549.30" x2="222.40" y2="551.30" stroke="#B8C0E0" stroke-width="1"/>
<text x="151.7" y="548.8" font-size="16" fill="#F4F4F4">-240</text>
<text x="191.7" y="548.8" font-size="16" fill="#F4F4F4">240</text>
<text x="181.7" y="499.29999999999995" font-size="16" fill="#F4F4F4" text-anchor="middle">0</text>
<circle cx="181.7" cy="527.8" r="6" fill="#DCDCE0" stroke="#B02828" stroke-width="1"/>
<polygon points="183.3,527.8 183.2,507.8 182.3,487.8 181.1,487.8 180.2,507.8 180.1,527.8" fill="#FF0000"/>
</g>
<text x="186.8" y="583" font-size="16" fill="#0000FF" text-anchor="middle">Current0A</text>
<clipPath id="sg3"><rect x="240" y="467.5" width="124" height="99.89999999999998"/></clipPath>
<g clip-path="url(#sg3)">
<circle cx="302" cy="527.5" r="57.8" fill="#D6D4DA" stroke="#A4A0A8" stroke-width="1"/>
<circle cx="302" cy="527.5" r="54.5" fill="#F8F8F8"/>
<circle cx="302" cy="527.5" r="51" fill="#040404"/>
<circle cx="302" cy="527.5" r="46" fill="#2A2A2A"/>
<circle cx="302" cy="527.5" r="35" fill="url(#mface)"/>
<line x1="264.76" y1="549.00" x2="261.30" y2="551.00" stroke="#B8C0E0" stroke-width="1"/>
<line x1="262.72" y1="544.99" x2="259.06" y2="546.62" stroke="#000" stroke-width="0.9"/>
<line x1="261.10" y1="540.79" x2="257.30" y2="542.02" stroke="#000" stroke-width="0.9"/>
<line x1="259.94" y1="536.44" x2="256.03" y2="537.27" stroke="#000" stroke-width="0.9"/>
<line x1="259.24" y1="531.99" x2="255.26" y2="532.41" stroke="#000" stroke-width="0.9"/>
<line x1="259.00" y1="527.50" x2="255.00" y2="527.50" stroke="#B8C0E0" stroke-width="1"/>
<line x1="259.24" y1="523.01" x2="255.26" y2="522.59" stroke="#000" stroke-width="0.9"/>
<line x1="259.94" y1="518.56" x2="256.03" y2="517.73" stroke="#000" stroke-width="0.9"/>
<line x1="261.10" y1="514.21" x2="257.30" y2="512.98" stroke="#000" stroke-width="0.9"/>
<line x1="262.72" y1="510.01" x2="259.06" y2="508.38" stroke="#000" stroke-width="0.9"/>
<line x1="264.76" y1="506.00" x2="261.30" y2="504.00" stroke="#B8C0E0" stroke-width="1"/>
<line x1="267.21" y1="502.23" x2="263.98" y2="499.87" stroke="#000" stroke-width="0.9"/>
<line x1="270.04" y1="498.73" x2="267.07" y2="496.05" stroke="#000" stroke-width="0.9"/>
<line x1="273.23" y1="495.54" x2="270.55" y2="492.57" stroke="#000" stroke-width="0.9"/>
<line x1="276.73" y1="492.71" x2="274.37" y2="489.48" stroke="#000" stroke-width="0.9"/>
<line x1="280.50" y1="490.26" x2="278.50" y2="486.80" stroke="#B8C0E0" stroke-width="1"/>
<line x1="284.51" y1="488.22" x2="282.88" y2="484.56" stroke="#000" stroke-width="0.9"/>
<line x1="288.71" y1="486.60" x2="287.48" y2="482.80" stroke="#000" stroke-width="0.9"/>
<line x1="293.06" y1="485.44" x2="292.23" y2="481.53" stroke="#000" stroke-width="0.9"/>
<line x1="297.51" y1="484.74" x2="297.09" y2="480.76" stroke="#000" stroke-width="0.9"/>
<line x1="302.00" y1="484.50" x2="302.00" y2="480.50" stroke="#B8C0E0" stroke-width="1"/>
<line x1="306.49" y1="484.74" x2="306.91" y2="480.76" stroke="#000" stroke-width="0.9"/>
<line x1="310.94" y1="485.44" x2="311.77" y2="481.53" stroke="#000" stroke-width="0.9"/>
<line x1="315.29" y1="486.60" x2="316.52" y2="482.80" stroke="#000" stroke-width="0.9"/>
<line x1="319.49" y1="488.22" x2="321.12" y2="484.56" stroke="#000" stroke-width="0.9"/>
<line x1="323.50" y1="490.26" x2="325.50" y2="486.80" stroke="#B8C0E0" stroke-width="1"/>
<line x1="327.27" y1="492.71" x2="329.63" y2="489.48" stroke="#000" stroke-width="0.9"/>
<line x1="330.77" y1="495.54" x2="333.45" y2="492.57" stroke="#000" stroke-width="0.9"/>
<line x1="333.96" y1="498.73" x2="336.93" y2="496.05" stroke="#000" stroke-width="0.9"/>
<line x1="336.79" y1="502.23" x2="340.02" y2="499.87" stroke="#000" stroke-width="0.9"/>
<line x1="339.24" y1="506.00" x2="342.70" y2="504.00" stroke="#B8C0E0" stroke-width="1"/>
<line x1="341.28" y1="510.01" x2="344.94" y2="508.38" stroke="#000" stroke-width="0.9"/>
<line x1="342.90" y1="514.21" x2="346.70" y2="512.98" stroke="#000" stroke-width="0.9"/>
<line x1="344.06" y1="518.56" x2="347.97" y2="517.73" stroke="#000" stroke-width="0.9"/>
<line x1="344.76" y1="523.01" x2="348.74" y2="522.59" stroke="#000" stroke-width="0.9"/>
<line x1="345.00" y1="527.50" x2="349.00" y2="527.50" stroke="#B8C0E0" stroke-width="1"/>
<line x1="344.76" y1="531.99" x2="348.74" y2="532.41" stroke="#000" stroke-width="0.9"/>
<line x1="344.06" y1="536.44" x2="347.97" y2="537.27" stroke="#000" stroke-width="0.9"/>
<line x1="342.90" y1="540.79" x2="346.70" y2="542.02" stroke="#000" stroke-width="0.9"/>
<line x1="341.28" y1="544.99" x2="344.94" y2="546.62" stroke="#000" stroke-width="0.9"/>
<line x1="339.24" y1="549.00" x2="342.70" y2="551.00" stroke="#B8C0E0" stroke-width="1"/>
<text x="272" y="548.5" font-size="16" fill="#F4F4F4">0</text>
<text x="312" y="548.5" font-size="16" fill="#F4F4F4">256</text>
<circle cx="302" cy="527.5" r="6" fill="#DCDCE0" stroke="#B02828" stroke-width="1"/>
<polygon points="301.2,526.1 283.9,536.2 267.1,547.0 267.7,548.0 285.4,538.8 302.8,528.9" fill="#FF0000"/>
</g>
<text x="306.7" y="583" font-size="16" fill="#0000FF" text-anchor="middle">Throttle0</text>
<clipPath id="sg4"><rect x="519.4" y="467.9" width="124" height="99.5"/></clipPath>
<g clip-path="url(#sg4)">
<circle cx="581.4" cy="527.9" r="57.8" fill="#D6D4DA" stroke="#A4A0A8" stroke-width="1"/>
<circle cx="581.4" cy="527.9" r="54.5" fill="#F8F8F8"/>
<circle cx="581.4" cy="527.9" r="51" fill="#040404"/>
<circle cx="581.4" cy="527.9" r="46" fill="#2A2A2A"/>
<circle cx="581.4" cy="527.9" r="35" fill="url(#mface)"/>
<line x1="544.16" y1="549.40" x2="540.70" y2="551.40" stroke="#B8C0E0" stroke-width="1"/>
<line x1="542.12" y1="545.39" x2="538.46" y2="547.02" stroke="#000" stroke-width="0.9"/>
<line x1="540.50" y1="541.19" x2="536.70" y2="542.42" stroke="#000" stroke-width="0.9"/>
<line x1="539.34" y1="536.84" x2="535.43" y2="537.67" stroke="#000" stroke-width="0.9"/>
<line x1="538.64" y1="532.39" x2="534.66" y2="532.81" stroke="#000" stroke-width="0.9"/>
<line x1="538.40" y1="527.90" x2="534.40" y2="527.90" stroke="#B8C0E0" stroke-width="1"/>
<line x1="538.64" y1="523.41" x2="534.66" y2="522.99" stroke="#000" stroke-width="0.9"/>
<line x1="539.34" y1="518.96" x2="535.43" y2="518.13" stroke="#000" stroke-width="0.9"/>
<line x1="540.50" y1="514.61" x2="536.70" y2="513.38" stroke="#000" stroke-width="0.9"/>
<line x1="542.12" y1="510.41" x2="538.46" y2="508.78" stroke="#000" stroke-width="0.9"/>
<line x1="544.16" y1="506.40" x2="540.70" y2="504.40" stroke="#B8C0E0" stroke-width="1"/>
<line x1="546.61" y1="502.63" x2="543.38" y2="500.27" stroke="#000" stroke-width="0.9"/>
<line x1="549.44" y1="499.13" x2="546.47" y2="496.45" stroke="#000" stroke-width="0.9"/>
<line x1="552.63" y1="495.94" x2="549.95" y2="492.97" stroke="#000" stroke-width="0.9"/>
<line x1="556.13" y1="493.11" x2="553.77" y2="489.88" stroke="#000" stroke-width="0.9"/>
<line x1="559.90" y1="490.66" x2="557.90" y2="487.20" stroke="#B8C0E0" stroke-width="1"/>
<line x1="563.91" y1="488.62" x2="562.28" y2="484.96" stroke="#000" stroke-width="0.9"/>
<line x1="568.11" y1="487.00" x2="566.88" y2="483.20" stroke="#000" stroke-width="0.9"/>
<line x1="572.46" y1="485.84" x2="571.63" y2="481.93" stroke="#000" stroke-width="0.9"/>
<line x1="576.91" y1="485.14" x2="576.49" y2="481.16" stroke="#000" stroke-width="0.9"/>
<line x1="581.40" y1="484.90" x2="581.40" y2="480.90" stroke="#B8C0E0" stroke-width="1"/>
<line x1="585.89" y1="485.14" x2="586.31" y2="481.16" stroke="#000" stroke-width="0.9"/>
<line x1="590.34" y1="485.84" x2="591.17" y2="481.93" stroke="#000" stroke-width="0.9"/>
<line x1="594.69" y1="487.00" x2="595.92" y2="483.20" stroke="#000" stroke-width="0.9"/>
<line x1="598.89" y1="488.62" x2="600.52" y2="484.96" stroke="#000" stroke-width="0.9"/>
<line x1="602.90" y1="490.66" x2="604.90" y2="487.20" stroke="#B8C0E0" stroke-width="1"/>
<line x1="606.67" y1="493.11" x2="609.03" y2="489.88" stroke="#000" stroke-width="0.9"/>
<line x1="610.17" y1="495.94" x2="612.85" y2="492.97" stroke="#000" stroke-width="0.9"/>
<line x1="613.36" y1="499.13" x2="616.33" y2="496.45" stroke="#000" stroke-width="0.9"/>
<line x1="616.19" y1="502.63" x2="619.42" y2="500.27" stroke="#000" stroke-width="0.9"/>
<line x1="618.64" y1="506.40" x2="622.10" y2="504.40" stroke="#B8C0E0" stroke-width="1"/>
<line x1="620.68" y1="510.41" x2="624.34" y2="508.78" stroke="#000" stroke-width="0.9"/>
<line x1="622.30" y1="514.61" x2="626.10" y2="513.38" stroke="#000" stroke-width="0.9"/>
<line x1="623.46" y1="518.96" x2="627.37" y2="518.13" stroke="#000" stroke-width="0.9"/>
<line x1="624.16" y1="523.41" x2="628.14" y2="522.99" stroke="#000" stroke-width="0.9"/>
<line x1="624.40" y1="527.90" x2="628.40" y2="527.90" stroke="#B8C0E0" stroke-width="1"/>
<line x1="624.16" y1="532.39" x2="628.14" y2="532.81" stroke="#000" stroke-width="0.9"/>
<line x1="623.46" y1="536.84" x2="627.37" y2="537.67" stroke="#000" stroke-width="0.9"/>
<line x1="622.30" y1="541.19" x2="626.10" y2="542.42" stroke="#000" stroke-width="0.9"/>
<line x1="620.68" y1="545.39" x2="624.34" y2="547.02" stroke="#000" stroke-width="0.9"/>
<line x1="618.64" y1="549.40" x2="622.10" y2="551.40" stroke="#B8C0E0" stroke-width="1"/>
<text x="551.4" y="548.9" font-size="16" fill="#F4F4F4">0</text>
<text x="591.4" y="548.9" font-size="16" fill="#F4F4F4">600</text>
<circle cx="581.4" cy="527.9" r="6" fill="#DCDCE0" stroke="#B02828" stroke-width="1"/>
<polygon points="580.6,526.5 563.3,536.6 546.5,547.4 547.1,548.4 564.8,539.2 582.2,529.3" fill="#FF0000"/>
</g>
<text x="579.3" y="583" font-size="16" fill="#0000FF" text-anchor="middle">A-Phase0.0A</text>
<clipPath id="sg5"><rect x="639.8" y="467.9" width="124" height="99.5"/></clipPath>
<g clip-path="url(#sg5)">
<circle cx="701.8" cy="527.9" r="57.8" fill="#D6D4DA" stroke="#A4A0A8" stroke-width="1"/>
<circle cx="701.8" cy="527.9" r="54.5" fill="#F8F8F8"/>
<circle cx="701.8" cy="527.9" r="51" fill="#040404"/>
<circle cx="701.8" cy="527.9" r="46" fill="#2A2A2A"/>
<circle cx="701.8" cy="527.9" r="35" fill="url(#mface)"/>
<line x1="664.56" y1="549.40" x2="661.10" y2="551.40" stroke="#B8C0E0" stroke-width="1"/>
<line x1="662.52" y1="545.39" x2="658.86" y2="547.02" stroke="#000" stroke-width="0.9"/>
<line x1="660.90" y1="541.19" x2="657.10" y2="542.42" stroke="#000" stroke-width="0.9"/>
<line x1="659.74" y1="536.84" x2="655.83" y2="537.67" stroke="#000" stroke-width="0.9"/>
<line x1="659.04" y1="532.39" x2="655.06" y2="532.81" stroke="#000" stroke-width="0.9"/>
<line x1="658.80" y1="527.90" x2="654.80" y2="527.90" stroke="#B8C0E0" stroke-width="1"/>
<line x1="659.04" y1="523.41" x2="655.06" y2="522.99" stroke="#000" stroke-width="0.9"/>
<line x1="659.74" y1="518.96" x2="655.83" y2="518.13" stroke="#000" stroke-width="0.9"/>
<line x1="660.90" y1="514.61" x2="657.10" y2="513.38" stroke="#000" stroke-width="0.9"/>
<line x1="662.52" y1="510.41" x2="658.86" y2="508.78" stroke="#000" stroke-width="0.9"/>
<line x1="664.56" y1="506.40" x2="661.10" y2="504.40" stroke="#B8C0E0" stroke-width="1"/>
<line x1="667.01" y1="502.63" x2="663.78" y2="500.27" stroke="#000" stroke-width="0.9"/>
<line x1="669.84" y1="499.13" x2="666.87" y2="496.45" stroke="#000" stroke-width="0.9"/>
<line x1="673.03" y1="495.94" x2="670.35" y2="492.97" stroke="#000" stroke-width="0.9"/>
<line x1="676.53" y1="493.11" x2="674.17" y2="489.88" stroke="#000" stroke-width="0.9"/>
<line x1="680.30" y1="490.66" x2="678.30" y2="487.20" stroke="#B8C0E0" stroke-width="1"/>
<line x1="684.31" y1="488.62" x2="682.68" y2="484.96" stroke="#000" stroke-width="0.9"/>
<line x1="688.51" y1="487.00" x2="687.28" y2="483.20" stroke="#000" stroke-width="0.9"/>
<line x1="692.86" y1="485.84" x2="692.03" y2="481.93" stroke="#000" stroke-width="0.9"/>
<line x1="697.31" y1="485.14" x2="696.89" y2="481.16" stroke="#000" stroke-width="0.9"/>
<line x1="701.80" y1="484.90" x2="701.80" y2="480.90" stroke="#B8C0E0" stroke-width="1"/>
<line x1="706.29" y1="485.14" x2="706.71" y2="481.16" stroke="#000" stroke-width="0.9"/>
<line x1="710.74" y1="485.84" x2="711.57" y2="481.93" stroke="#000" stroke-width="0.9"/>
<line x1="715.09" y1="487.00" x2="716.32" y2="483.20" stroke="#000" stroke-width="0.9"/>
<line x1="719.29" y1="488.62" x2="720.92" y2="484.96" stroke="#000" stroke-width="0.9"/>
<line x1="723.30" y1="490.66" x2="725.30" y2="487.20" stroke="#B8C0E0" stroke-width="1"/>
<line x1="727.07" y1="493.11" x2="729.43" y2="489.88" stroke="#000" stroke-width="0.9"/>
<line x1="730.57" y1="495.94" x2="733.25" y2="492.97" stroke="#000" stroke-width="0.9"/>
<line x1="733.76" y1="499.13" x2="736.73" y2="496.45" stroke="#000" stroke-width="0.9"/>
<line x1="736.59" y1="502.63" x2="739.82" y2="500.27" stroke="#000" stroke-width="0.9"/>
<line x1="739.04" y1="506.40" x2="742.50" y2="504.40" stroke="#B8C0E0" stroke-width="1"/>
<line x1="741.08" y1="510.41" x2="744.74" y2="508.78" stroke="#000" stroke-width="0.9"/>
<line x1="742.70" y1="514.61" x2="746.50" y2="513.38" stroke="#000" stroke-width="0.9"/>
<line x1="743.86" y1="518.96" x2="747.77" y2="518.13" stroke="#000" stroke-width="0.9"/>
<line x1="744.56" y1="523.41" x2="748.54" y2="522.99" stroke="#000" stroke-width="0.9"/>
<line x1="744.80" y1="527.90" x2="748.80" y2="527.90" stroke="#B8C0E0" stroke-width="1"/>
<line x1="744.56" y1="532.39" x2="748.54" y2="532.81" stroke="#000" stroke-width="0.9"/>
<line x1="743.86" y1="536.84" x2="747.77" y2="537.67" stroke="#000" stroke-width="0.9"/>
<line x1="742.70" y1="541.19" x2="746.50" y2="542.42" stroke="#000" stroke-width="0.9"/>
<line x1="741.08" y1="545.39" x2="744.74" y2="547.02" stroke="#000" stroke-width="0.9"/>
<line x1="739.04" y1="549.40" x2="742.50" y2="551.40" stroke="#B8C0E0" stroke-width="1"/>
<text x="671.8" y="548.9" font-size="16" fill="#F4F4F4">0</text>
<text x="711.8" y="548.9" font-size="16" fill="#F4F4F4">600</text>
<circle cx="701.8" cy="527.9" r="6" fill="#DCDCE0" stroke="#B02828" stroke-width="1"/>
<polygon points="701.0,526.5 683.7,536.6 666.9,547.4 667.5,548.4 685.2,539.2 702.6,529.3" fill="#FF0000"/>
</g>
<text x="699.4" y="583" font-size="16" fill="#0000FF" text-anchor="middle">C-Phase0.0A</text>
<circle cx="411" cy="506.5" r="28" fill="#FFFFFF" stroke="#D4D4D4" stroke-width="1"/>
<g fill="#C2C2C2"><path d="M400.4 490.2L403.8 490.8L401.6 497.5V523H398.2V503.5L395.2 507L394 505Z"/><path d="M412.5 490L417.5 490.2L418.6 493.2H412.8Z"/><rect x="404.2" y="493.2" width="23.9" height="2.8"/><path d="M406 497.4H425.1V505.9H406Z M410.9 500.1V503.1H421.4V500.1Z" fill-rule="evenodd"/><path d="M403.3 507H428.1V511.6H424.1V509.8H407V511.6H403.3Z"/><rect x="406" y="513.4" width="20" height="3"/><path d="M414.2 516.4H418.4V522.8H409.3V520.1H414.2Z"/></g>
<circle cx="472" cy="506.5" r="21.5" fill="#fff"/><clipPath id="xc"><circle cx="472" cy="506.5" r="23"/></clipPath>
<path d="M457 491.5L487 521.5M487 491.5L457 521.5" stroke="#E82020" stroke-width="6.5" clip-path="url(#xc)"/><circle cx="472" cy="506.5" r="21.5" fill="none" stroke="#E82020" stroke-width="5"/>
<rect x="382" y="538" width="120" height="40" fill="#22B14C"/>
<text x="442" y="571" font-size="36" font-weight="bold" fill="#FFFFFF" text-anchor="middle">HALL</text>
<text x="22" y="613" font-size="16" fill="#0000FF">Received Frame300 Code0</text>
<clipPath id="cm"><rect x="2" y="600" width="1158" height="40"/></clipPath>
<text x="22" y="633" font-size="16" fill="#FF0000" clip-path="url(#cm)">Syetem OK<tspan letter-spacing="-0.26">²Ù×÷ÃÜÂë´í²Ù×÷ÃÜÂë´í²Ù×÷ÃÜÂë´í²Ù×÷ÃÜÂë´í²Ù×÷ÃÜÂë´í²Ù×÷ÃÜÂë´í²Ù×÷ÃÜÂë´í²Ù×÷ÃÜÂë´í²Ù×÷ÃÜÂë´í²Ù×÷ÃÜÂë´í²Ù×÷ÃÜÂë´í²Ù×÷ÃÜÂë´í²Ù×÷ÃÜÂë´í²Ù×÷ÃÜÂë´í²Ù×÷ÃÜÂë´í²Ù×÷ÃÜÂë´í</tspan></text></svg>
<div class="a" style="left:1166px;top:146px;width:200px;height:557px;background:#D4E3F4"></div>
<div class="a" style="left:1166px;top:146px;width:200px;height:20px;background:#BACFEA"></div>
<div class="t" style="left:1170px;top:150px;color:#1E4A9A;font-size:11px;letter-spacing:-1.1px">?????</div>
<svg class="a" style="left:1334px;top:149px" width="28" height="14"><path d="M3.5 2.5h5v5h-5z M2 7.5h8 M6 7.5v4" stroke="#3C5A9A" fill="none"/><path d="M18.5 2.5l7 7M25.5 2.5l-7 7" stroke="#3C5A9A" stroke-width="1.3"/></svg>
<div class="a" style="left:1166px;top:166px;width:200px;height:20px;background:#fff;border:1px solid #6E6E6E"></div>
<div class="t" style="left:1171px;top:169px;color:#000;font-size:12px">ÐÂ²ÎÊýÎÄ¼þ</div>
<div class="a" style="left:1166px;top:186px;width:200px;height:23px;background:linear-gradient(#E6EFFB,#C4D8F2)"></div>
<svg class="a" style="left:1166px;top:186px" width="94" height="24" shape-rendering="crispEdges">
<rect x="5.5" y="4.5" width="5" height="5" fill="#fff" stroke="#5080C0"/><path d="M7 7h3M8 5.5v3" stroke="#000"/>
<rect x="5.5" y="13.5" width="5" height="5" fill="#fff" stroke="#5080C0"/><path d="M7 16h3M8 14.5v3" stroke="#000"/>
<path d="M13 6h4M13 17h4" stroke="#606060"/>
<path d="M13 8h4M13 10h4M13 12h4M18 8h3M18 10h3M18 12h3M18 14h3" stroke="#90A0B8"/>
<path d="M1206.5 190v14M1204.5 201.5l2 2.5l2-2.5" transform="translate(-1166,-186)" stroke="#000" fill="none"/>
<rect x="71.5" y="4.5" width="15" height="14" fill="#fff" stroke="#0000FF"/>
<path d="M77 5h4v6h5v1l-7 7l-7-7v-1h5z" fill="#FF0000"/>
</svg>
<div class="t" style="left:1193px;top:188px;font-family:&quot;Liberation Serif&quot;,serif;font-weight:bold;font-size:10px;color:#3050A8">A</div>
<div class="t" style="left:1193px;top:197px;font-family:&quot;Liberation Serif&quot;,serif;font-weight:bold;font-size:10px;color:#A83828">Z</div>
<div class="a" style="left:1166px;top:209px;width:183px;height:429px;background:#D4E3F4;overflow:hidden">
<div class="a" style="left:0;top:-1px;width:183px;height:19px;background:#D4E3F4"></div>
<div class="a" style="left:5px;top:3px;width:9px;height:9px;border:1px solid #8A8A8A;background:#F4F4F4"></div>
<div class="a" style="left:7px;top:7px;width:5px;height:1px;background:#202020"></div>
<div class="a" style="left:9px;top:5px;width:1px;height:5px;background:#202020"></div>
<div class="t" style="left:23px;top:3px;color:#A4BCDC;font-weight:bold;font-size:11px">Paras</div>
<div class="a" style="left:0;top:18px;width:183px;height:19px;background:#D4E3F4"></div>
<div class="a" style="left:5px;top:22px;width:9px;height:9px;border:1px solid #8A8A8A;background:#F4F4F4"></div>
<div class="a" style="left:7px;top:26px;width:5px;height:1px;background:#202020"></div>
<div class="t" style="left:23px;top:22px;color:#A4BCDC;font-weight:bold;font-size:11px">Status</div>
<div class="a" style="left:19px;top:37px;width:164px;height:19px;background:#fff;border-top:1px solid #D4E3F4"></div>
<div class="a" style="left:100px;top:37px;width:1px;height:19px;background:#D4E3F4"></div>
<div class="t" style="left:23px;top:42px;color:#000;font-size:11px">Gear</div>
<div class="t" style="left:105px;top:42px;color:#000;font-size:11px">Empty</div>
<div class="a" style="left:19px;top:56px;width:164px;height:19px;background:#fff;border-top:1px solid #D4E3F4"></div>
<div class="a" style="left:100px;top:56px;width:1px;height:19px;background:#D4E3F4"></div>
<div class="t" style="left:23px;top:61px;color:#000;font-size:11px">Roll</div>
<div class="t" style="left:105px;top:61px;color:#000;font-size:11px">Stop</div>
<div class="a" style="left:19px;top:75px;width:164px;height:19px;background:#fff;border-top:1px solid #D4E3F4"></div>
<div class="a" style="left:100px;top:75px;width:1px;height:19px;background:#D4E3F4"></div>
<div class="t" style="left:23px;top:80px;color:#000;font-size:11px">FOC Temp</div>
<div class="t" style="left:105px;top:80px;color:#000;font-size:11px">4¡æ</div>
<div class="a" style="left:19px;top:94px;width:164px;height:19px;background:#fff;border-top:1px solid #D4E3F4"></div>
<div class="a" style="left:100px;top:94px;width:1px;height:19px;background:#D4E3F4"></div>
<div class="t" style="left:23px;top:99px;color:#000;font-size:11px">Throttle Vol</div>
<div class="t" style="left:105px;top:99px;color:#000;font-size:11px">0.88V</div>
<div class="a" style="left:19px;top:113px;width:164px;height:19px;background:#fff;border-top:1px solid #D4E3F4"></div>
<div class="a" style="left:100px;top:113px;width:1px;height:19px;background:#D4E3F4"></div>
<div class="t" style="left:23px;top:118px;color:#000;font-size:11px">POS</div>
<div class="t" style="left:105px;top:118px;color:#000;font-size:11px">0.0</div>
<div class="a" style="left:19px;top:132px;width:164px;height:19px;background:#fff;border-top:1px solid #D4E3F4"></div>
<div class="a" style="left:100px;top:132px;width:1px;height:19px;background:#D4E3F4"></div>
<div class="t" style="left:23px;top:137px;color:#000;font-size:11px">Mod Ratio</div>
<div class="t" style="left:105px;top:137px;color:#000;font-size:11px">0.00</div>
<div class="a" style="left:19px;top:151px;width:164px;height:19px;background:#fff;border-top:1px solid #D4E3F4"></div>
<div class="a" style="left:100px;top:151px;width:1px;height:19px;background:#D4E3F4"></div>
<div class="t" style="left:23px;top:156px;color:#000;font-size:11px">1Time</div>
<div class="t" style="left:105px;top:156px;color:#000;font-size:11px">21.00us</div>
<div class="a" style="left:19px;top:170px;width:164px;height:19px;background:#fff;border-top:1px solid #D4E3F4"></div>
<div class="a" style="left:100px;top:170px;width:1px;height:19px;background:#D4E3F4"></div>
<div class="t" style="left:23px;top:175px;color:#000;font-size:11px">MaxIS</div>
<div class="t" style="left:105px;top:175px;color:#000;font-size:11px">625.0</div>
<div class="a" style="left:19px;top:189px;width:164px;height:19px;background:#fff;border-top:1px solid #D4E3F4"></div>
<div class="a" style="left:100px;top:189px;width:1px;height:19px;background:#D4E3F4"></div>
<div class="t" style="left:23px;top:194px;color:#000;font-size:11px">HALL</div>
<div class="t" style="left:105px;top:194px;color:#000;font-size:11px">100</div>
<div class="a" style="left:19px;top:208px;width:164px;height:19px;background:#fff;border-top:1px solid #D4E3F4"></div>
<div class="a" style="left:100px;top:208px;width:1px;height:19px;background:#D4E3F4"></div>
<div class="t" style="left:23px;top:213px;color:#000;font-size:11px">Zero Line</div>
<div class="t" style="left:105px;top:213px;color:#000;font-size:11px">0</div>
<div class="a" style="left:19px;top:227px;width:164px;height:19px;background:#fff;border-top:1px solid #D4E3F4"></div>
<div class="a" style="left:100px;top:227px;width:1px;height:19px;background:#D4E3F4"></div>
<div class="t" style="left:23px;top:232px;color:#000;font-size:11px">Zero Phase A</div>
<div class="t" style="left:105px;top:232px;color:#000;font-size:11px">2097</div>
<div class="a" style="left:19px;top:246px;width:164px;height:19px;background:#fff;border-top:1px solid #D4E3F4"></div>
<div class="a" style="left:100px;top:246px;width:1px;height:19px;background:#D4E3F4"></div>
<div class="t" style="left:23px;top:251px;color:#000;font-size:11px">Zero Phase C</div>
<div class="t" style="left:105px;top:251px;color:#000;font-size:11px">2098</div>
<div class="a" style="left:19px;top:265px;width:164px;height:19px;background:#fff;border-top:1px solid #D4E3F4"></div>
<div class="a" style="left:100px;top:265px;width:1px;height:19px;background:#D4E3F4"></div>
<div class="t" style="left:23px;top:270px;color:#000;font-size:11px">Time</div>
<div class="t" style="left:105px;top:270px;color:#000;font-size:11px">197us</div>
<div class="a" style="left:0;top:284px;width:183px;height:19px;background:#D4E3F4"></div>
<div class="a" style="left:5px;top:288px;width:9px;height:9px;border:1px solid #8A8A8A;background:#F4F4F4"></div>
<div class="a" style="left:7px;top:292px;width:5px;height:1px;background:#202020"></div>
<div class="t" style="left:23px;top:288px;color:#A4BCDC;font-weight:bold;font-size:11px">ErrorCount</div>
<div class="a" style="left:19px;top:303px;width:164px;height:19px;background:#fff;border-top:1px solid #D4E3F4"></div>
<div class="a" style="left:100px;top:303px;width:1px;height:19px;background:#D4E3F4"></div>
<div class="t" style="left:23px;top:308px;color:#000;font-size:11px">MOE</div>
<div class="t" style="left:105px;top:308px;color:#000;font-size:11px">0</div>
<div class="a" style="left:19px;top:322px;width:164px;height:19px;background:#fff;border-top:1px solid #D4E3F4"></div>
<div class="a" style="left:100px;top:322px;width:1px;height:19px;background:#D4E3F4"></div>
<div class="t" style="left:23px;top:327px;color:#000;font-size:11px">LINE</div>
<div class="t" style="left:105px;top:327px;color:#000;font-size:11px">0</div>
<div class="a" style="left:19px;top:341px;width:164px;height:19px;background:#fff;border-top:1px solid #D4E3F4"></div>
<div class="a" style="left:100px;top:341px;width:1px;height:19px;background:#D4E3F4"></div>
<div class="t" style="left:23px;top:346px;color:#000;font-size:11px">OVER</div>
<div class="t" style="left:105px;top:346px;color:#000;font-size:11px">0</div>
<div class="a" style="left:19px;top:360px;width:164px;height:19px;background:#fff;border-top:1px solid #D4E3F4"></div>
<div class="a" style="left:100px;top:360px;width:1px;height:19px;background:#D4E3F4"></div>
<div class="t" style="left:23px;top:365px;color:#000;font-size:11px">PHASE</div>
<div class="t" style="left:105px;top:365px;color:#000;font-size:11px">0</div>
<div class="a" style="left:19px;top:379px;width:164px;height:19px;background:#fff;border-top:1px solid #D4E3F4"></div>
<div class="a" style="left:100px;top:379px;width:1px;height:19px;background:#D4E3F4"></div>
<div class="t" style="left:23px;top:384px;color:#000;font-size:11px">ANGLE</div>
<div class="t" style="left:105px;top:384px;color:#000;font-size:11px">0</div>
<div class="a" style="left:19px;top:398px;width:164px;height:19px;background:#fff;border-top:1px solid #D4E3F4"></div>
<div class="a" style="left:100px;top:398px;width:1px;height:19px;background:#D4E3F4"></div>
<div class="t" style="left:23px;top:403px;color:#000;font-size:11px">AB15</div>
<div class="t" style="left:105px;top:403px;color:#000;font-size:11px">0</div>
<div class="a" style="left:19px;top:417px;width:164px;height:19px;background:#fff;border-top:1px solid #D4E3F4"></div>
<div class="a" style="left:100px;top:417px;width:1px;height:19px;background:#D4E3F4"></div>
<div class="t" style="left:23px;top:422px;color:#000;font-size:11px">ABZ</div>
<div class="t" style="left:105px;top:422px;color:#000;font-size:11px">0</div>
</div>
<div class="a" style="left:1349px;top:209px;width:17px;height:429px;background:repeating-conic-gradient(#FFFFFF 0 25%,#E4E4E4 0 50%) 0 0/2px 2px"></div>
<div class="a" style="left:1349px;top:209px;width:17px;height:17px;background:#F0F0F0;border:1px solid #fff;border-right:2px solid #696969;border-bottom:2px solid #696969"></div>
<div class="a" style="left:1353px;top:214px;border-left:4.5px solid transparent;border-right:4.5px solid transparent;border-bottom:4.5px solid #000"></div>
<div class="a" style="left:1349px;top:226px;width:17px;height:230px;background:#EEEEEE;border:1px solid #fff;border-right:2px solid #696969;border-bottom:2px solid #696969"></div>
<div class="a" style="left:1349px;top:621px;width:17px;height:17px;background:#F0F0F0;border:1px solid #fff;border-right:2px solid #696969;border-bottom:2px solid #696969"></div>
<div class="a" style="left:1353px;top:627px;border-left:4.5px solid transparent;border-right:4.5px solid transparent;border-top:4.5px solid #000"></div>
<div class="a" style="left:1166px;top:638px;width:200px;height:65px;background:#D4E3F4;border-top:1px solid #E8F0FA"></div>
<div class="a" style="left:1167px;top:643px;width:198px;height:60px;border:1px solid #AFC6E2;background:#D2E2F4"></div>
<div class="a" style="left:0;top:703px;width:1366px;height:25px;background:linear-gradient(#C4D8F0 0px,#C4D8F0 1px,#5A80B6 1px,#5A80B6 2px,#E2EDFB 3px,#D4E5F9 6px,#B6D1F2 10px,#B4CFF0 15px,#C8DDF6 25px)"></div>
<div class="t" style="left:9px;top:711px;color:#15428B;font-size:11px;letter-spacing:0.2px">Syetem OK²Ù×÷ÃÜÂë´í²Ù×÷ÃÜÂë´í²Ù×÷ÃÜÂë´í²Ù×÷ÃÜÂë´í²Ù×÷ÃÜÂë´í²Ù×÷ÃÜÂë´í²Ù×÷ÃÜÂë´í²Ù×÷ÃÜÂë´í²Ù×÷ÃÜÂë´í²Ù×÷ÃÜÂë´í²Ù×÷ÃÜÂë´í²Ù×÷ÃÜÂë´í²Ù×÷ÃÜÂë´í</div>
</body></html>
